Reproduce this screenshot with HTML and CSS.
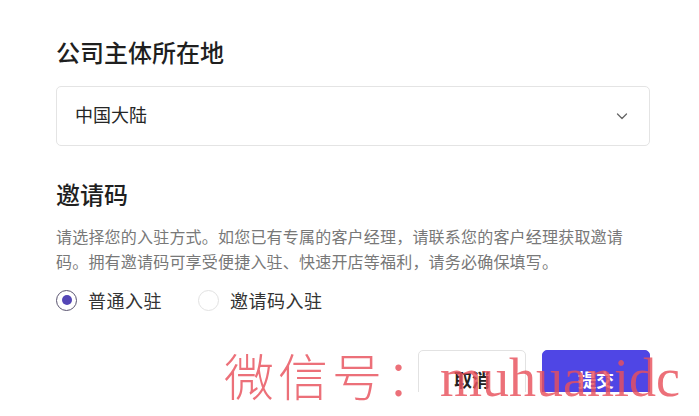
FILE: index.html
```html
<!DOCTYPE html>
<html lang="zh">
<head>
<meta charset="utf-8">
<link rel="stylesheet" href="styles.css">
</head>
<body>
<div class="page">
  <section class="field">
    <h2 class="label">公司主体所在地</h2>
    <div class="select">
      <span class="select-value">中国大陆</span>
      <svg class="chevron" width="14" height="14" viewBox="0 0 14 14"><path d="M2.5 5 L7 9.5 L11.5 5" fill="none" stroke="#666" stroke-width="1.3" stroke-linecap="round" stroke-linejoin="round"/></svg>
    </div>
  </section>
  <section class="field invite">
    <h2 class="label">邀请码</h2>
    <p class="desc">请选择您的入驻方式。如您已有专属的客户经理，请联系您的客户经理获取邀请码。拥有邀请码可享受便捷入驻、快速开店等福利，请务必确保填写。</p>
    <div class="radios">
      <label class="radio checked"><span class="dot"></span><span>普通入驻</span></label>
      <label class="radio"><span class="dot"></span><span>邀请码入驻</span></label>
    </div>
  </section>
  <div class="actions">
    <button class="btn cancel">取消</button>
    <button class="btn submit">提交</button>
  </div>
</div>
<div class="watermark">微信号：<span class="wm-latin">muhuanidc</span></div>
</body>
</html>
```
FILE: styles.css
```css
html, body { margin: 0; padding: 0; background: #fff; }
body {
  position: relative;
  width: 699px;
  height: 416px;
  overflow: hidden;
  font-family: "Noto Sans CJK SC", "Noto Sans", sans-serif;
  color: #222;
}
.page {
  width: 699px;
  height: 392px;
  overflow: hidden;
  padding: 0 49px 0 56px;
  box-sizing: border-box;
}
.label {
  margin: 0;
  font-size: 24px;
  font-weight: 500;
  line-height: 32px;
  color: #1f1f1f;
}
.field:first-child { padding-top: 36px; }
.select {
  margin-top: 18px;
  height: 60px;
  box-sizing: border-box;
  border: 1px solid #e4e4e4;
  border-radius: 5px;
  display: flex;
  align-items: center;
  justify-content: space-between;
  padding: 0 20px 4px 18px;
}
.select-value { font-size: 18px; color: #262626; line-height: 24px; }
.chevron { display: block; margin-top: 4px; }
.invite { margin-top: 32px; }
.desc {
  margin: 14px 0 0;
  width: 576px;
  font-size: 16px;
  letter-spacing: 0.2px;
  line-height: 25px;
  color: #787878;
}
.radios {
  margin-top: 14px;
  display: flex;
  gap: 36px;
}
.radio {
  display: flex;
  align-items: center;
  gap: 11px;
  font-size: 18px;
  letter-spacing: 0.5px;
  color: #333;
  line-height: 24px;
}
.radio .dot {
  width: 21px;
  height: 21px;
  box-sizing: border-box;
  border-radius: 50%;
  border: 1px solid #e2e2e2;
  display: flex;
  align-items: center;
  justify-content: center;
}
.radio.checked .dot { border-color: #5a5470; }
.radio.checked .dot::after {
  content: "";
  width: 10px;
  height: 10px;
  border-radius: 50%;
  background: #5446b6;
}
.actions {
  margin-top: 38px;
  display: flex;
  justify-content: flex-end;
  gap: 16px;
}
.btn {
  height: 58px;
  border-radius: 5px;
  font-family: inherit;
  font-size: 18px;
  font-weight: 700;
  padding: 0;
}
.cancel {
  width: 108px;
  background: #fff;
  border: 1px solid #e2e2e2;
  color: #222;
}
.submit {
  width: 108px;
  background: #4f46e5;
  border: 1px solid #4f46e5;
  color: #fff;
}
.watermark {
  position: absolute;
  left: 224px;
  top: 344px;
  font-family: "Noto Sans CJK SC", sans-serif;
  font-weight: 300;
  font-size: 50px;
  letter-spacing: 4px;
  line-height: 60px;
  color: rgba(232, 80, 92, 0.82);
  white-space: nowrap;
  pointer-events: none;
}
.wm-latin {
  font-family: "Liberation Serif", serif;
  font-weight: 400;
  font-size: 54px;
  letter-spacing: 0;
}
```
